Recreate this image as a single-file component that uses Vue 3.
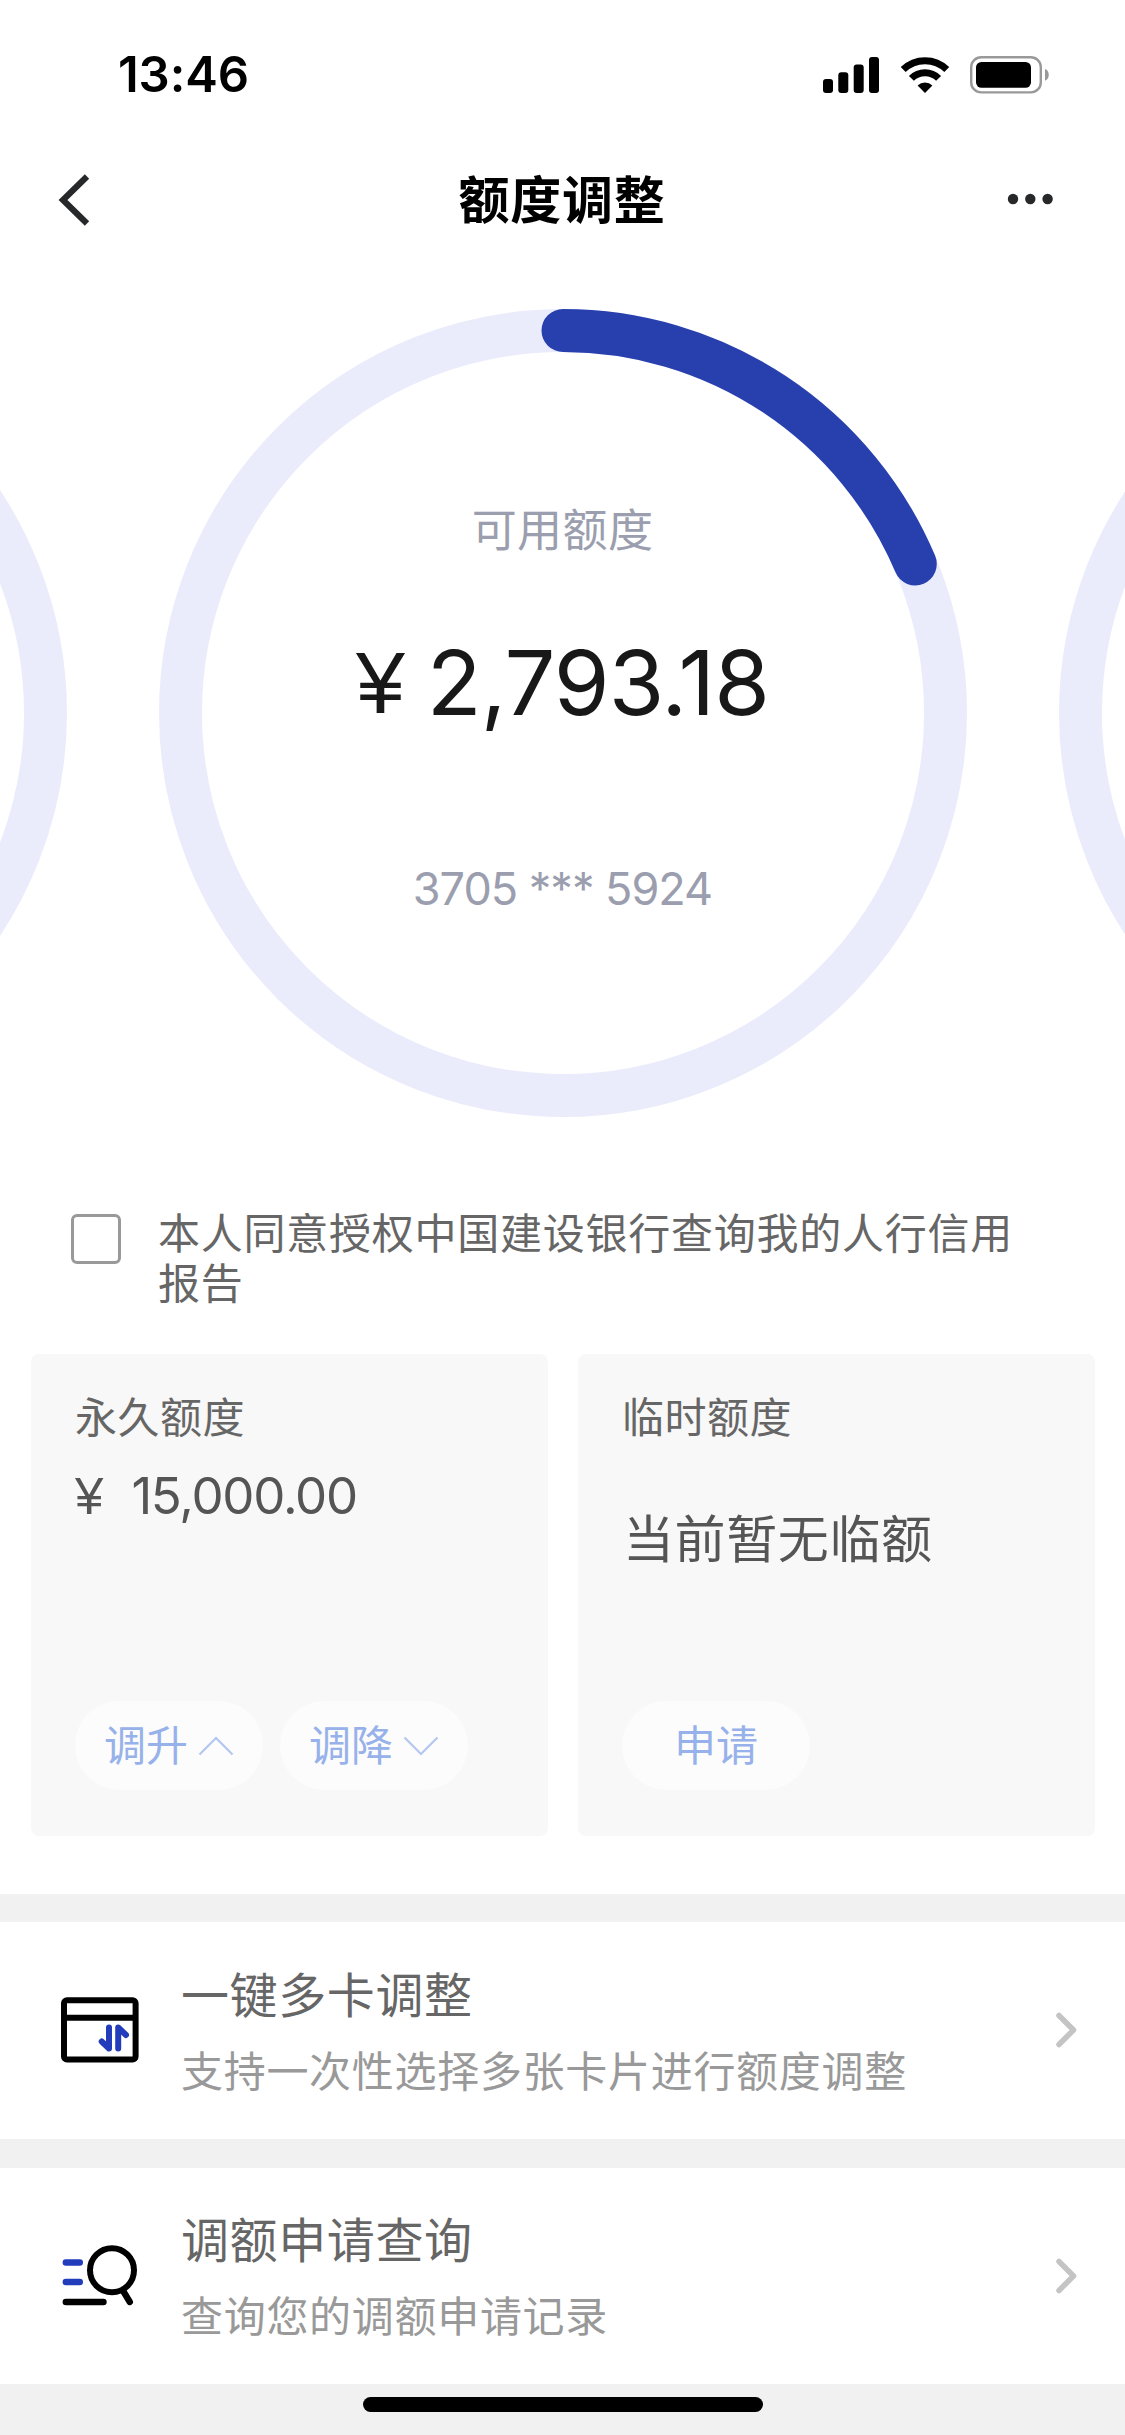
<script setup>
const radius = 382.5
const circumference = 2 * Math.PI * radius
const used = circumference * 0.1862
const dash = `${used} ${circumference}`

const entries = [
  { icon: 'card', title: '一键多卡调整', text: '支持一次性选择多张卡片进行额度调整' },
  { icon: 'search', title: '调额申请查询', text: '查询您的调额申请记录' },
]
</script>

<template>
  <div class="page">
    <header class="status">
      <span class="time">13:46</span>
      <div class="status-icons">
        <svg width="56" height="36" viewBox="0 0 56 36">
          <rect x="0" y="22" width="10" height="14" rx="3" />
          <rect x="15.3" y="15.3" width="10" height="20.7" rx="3" />
          <rect x="30.7" y="7.5" width="10" height="28.5" rx="3" />
          <rect x="46" y="0" width="10" height="36" rx="3" />
        </svg>
        <svg class="wifi" width="50" height="36" viewBox="0 0 50 36">
          <g fill="none" stroke="#000" stroke-width="7">
            <path d="M3.2 12.6A31.2 31.2 0 0 1 46.8 12.6" />
            <path d="M11.4 21.4A19.2 19.2 0 0 1 38.6 21.4" />
          </g>
          <path d="M25 36L17.6 28.4A10.6 10.6 0 0 1 32.4 28.4Z" />
        </svg>
        <svg class="battery" width="80" height="38" viewBox="0 0 80 38">
          <rect x="1.2" y="1.2" width="69.6" height="35.2" rx="10" fill="none" stroke="#999" stroke-width="2.4" />
          <rect x="6" y="6" width="55" height="25.8" rx="5.5" />
          <path d="M75 13C80 14.5 80 23 75 24.8Z" fill="#999" />
        </svg>
      </div>
    </header>

    <nav class="nav">
      <div class="side">
        <svg width="34" height="54" viewBox="0 0 34 54" fill="none" stroke="#27282a" stroke-width="6.2">
          <path d="M30 3.5L6 27L30 50.5" />
        </svg>
      </div>
      <h1>额度调整</h1>
      <div class="side end">
        <svg width="46" height="12" viewBox="0 0 46 12" fill="#27282a">
          <circle cx="6" cy="6" r="5.2" /><circle cx="23.3" cy="6" r="5.2" /><circle cx="40.6" cy="6" r="5.2" />
        </svg>
      </div>
    </nav>

    <section class="carousel">
      <svg class="ring" viewBox="0 0 808 808"><circle cx="404" cy="404" :r="radius" class="track" /></svg>
      <div class="quota">
        <svg class="ring" viewBox="0 0 808 808">
          <circle cx="404" cy="404" :r="radius" class="track" />
          <circle cx="404" cy="404" :r="radius" class="bar" :stroke-dasharray="dash" transform="rotate(-90 404 404)" />
        </svg>
        <div class="quota-info">
          <p class="quota-label">可用额度</p>
          <p class="quota-amount"><span class="yen">¥</span><span class="digits">2,793.18</span></p>
          <p class="quota-card">3705 *** 5924</p>
        </div>
      </div>
      <svg class="ring" viewBox="0 0 808 808"><circle cx="404" cy="404" :r="radius" class="track" /></svg>
    </section>

    <label class="agree">
      <span class="box"></span>
      <span class="agree-text">本人同意授权中国建设银行查询我的人行信用报告</span>
    </label>

    <section class="cards">
      <article class="card">
        <h2>永久额度</h2>
        <p class="amount"><span class="yen">¥</span><span class="digits">15,000.00</span></p>
        <div class="pills">
          <button class="pill">
            <span>调升</span>
            <svg width="36" height="20" viewBox="0 0 36 20"><path d="M1.5 18.5L18 2L34.5 18.5" /></svg>
          </button>
          <button class="pill">
            <span>调降</span>
            <svg width="36" height="20" viewBox="0 0 36 20"><path d="M1.5 1.5L18 18L34.5 1.5" /></svg>
          </button>
        </div>
      </article>
      <article class="card">
        <h2>临时额度</h2>
        <p class="empty">当前暂无临额</p>
        <div class="pills"><button class="pill solo"><span>申请</span></button></div>
      </article>
    </section>

    <section class="list">
      <a v-for="e in entries" :key="e.title" class="row">
        <svg v-if="e.icon === 'card'" width="78" height="66" viewBox="0 0 78 66" fill="none" stroke-linecap="round" stroke-linejoin="round">
          <rect x="3" y="3.2" width="71.6" height="59.4" rx="3" stroke="#000" stroke-width="6" />
          <path d="M3 20.8H74" stroke="#000" stroke-width="6" />
          <path d="M48 30.5V51.5L40.7 44.5M57.2 51.5V30.5L65 38" stroke="#233cbb" stroke-width="6" />
        </svg>
        <svg v-else width="78" height="66" viewBox="0 0 78 66" fill="none" stroke-linecap="round">
          <circle cx="51" cy="27.2" r="22" stroke="#000" stroke-width="6" />
          <path d="M62.5 48.5L68.8 59M4.8 59H42.5" stroke="#000" stroke-width="6.4" />
          <path d="M4.8 19.5H18.8M4.8 39H18.8" stroke="#233cbb" stroke-width="6.4" />
        </svg>
        <div class="row-body">
          <h3>{{ e.title }}</h3>
          <p>{{ e.text }}</p>
        </div>
        <svg class="go" width="24" height="36" viewBox="0 0 24 36"><path d="M4 3.5L18.5 18L4 32.5" /></svg>
      </a>
    </section>

    <footer class="home"><span></span></footer>
  </div>
</template>

<style>
body {
  margin: 0;
  background: #fff;
}
</style>

<style scoped>
.page {
  display: flex;
  flex-direction: column;
  width: 1125px;
  height: 2435px;
  overflow: hidden;
  background: #fff;
  font-family: "Noto Sans CJK SC", sans-serif;
}
h1, h2, h3, p {
  margin: 0;
  font-weight: 400;
}
svg {
  display: block;
  flex: none;
}
.status {
  display: flex;
  flex: none;
  justify-content: space-between;
  align-items: center;
  height: 149px;
  padding: 0 75px 0 118px;
}
.time {
  font: 600 49px/60px Inter, sans-serif;
  letter-spacing: -0.1px;
}
.status-icons {
  display: flex;
  align-items: center;
}
.wifi { margin-left: 20.5px; }
.battery { margin-left: 20.5px; }
.nav {
  display: flex;
  flex: none;
  align-items: center;
  height: 102px;
  padding: 0 72px 0 57px;
}
.side {
  display: flex;
  flex: 1;
}
.end {
  justify-content: flex-end;
  padding-bottom: 2px;
}
.nav h1 {
  padding: 0 0 6px 14px;
  font-size: 51px;
  line-height: 70px;
  font-weight: 700;
  letter-spacing: 0.8px;
}
.carousel {
  display: flex;
  flex: none;
  justify-content: center;
  gap: 92px;
  height: 808px;
  padding-top: 57.5px;
}
.ring {
  width: 808px;
  height: 808px;
}
.track, .bar {
  fill: none;
  stroke: #eaecfb;
  stroke-width: 43px;
}
.bar {
  stroke: #2840ae;
  stroke-linecap: round;
}
.quota {
  display: grid;
  flex: none;
}
.quota > * { grid-area: 1 / 1; }
.quota-info {
  display: flex;
  flex-direction: column;
  align-items: center;
}
.quota-label {
  margin-top: 187px;
  font-size: 45px;
  line-height: 64px;
  letter-spacing: 0.4px;
  color: #9b9eae;
}
.quota-amount {
  display: flex;
  align-items: baseline;
  gap: 22px;
  height: 110px;
  margin-top: 68px;
  font: 400 90px/110px Inter, sans-serif;
  color: #181818;
}
.yen { font-family: "Liberation Sans", sans-serif; }
.quota-amount .yen {
  font-size: 88px;
  margin-bottom: 2px;
  transform: translateY(-2px);
}
.quota-amount .digits { letter-spacing: -0.9px; }
.quota-card {
  margin-top: 121px;
  font: 400 45px/60px Inter, sans-serif;
  letter-spacing: -1px;
  color: #9b9eae;
}
.agree {
  display: flex;
  flex: none;
  gap: 37px;
  height: 148.5px;
  padding: 89px 80px 0 71px;
}
.box {
  flex: none;
  box-sizing: border-box;
  width: 50px;
  height: 50px;
  margin-top: 8px;
  border: 3px solid #999;
  border-radius: 6px;
}
.agree-text {
  font-size: 42px;
  line-height: 50px;
  letter-spacing: 0.75px;
  color: #666;
  width: 866px;
}
.cards {
  display: flex;
  flex: none;
  gap: 30px;
  padding: 0 30px 58px 31px;
}
.card {
  display: flex;
  flex: 1;
  flex-direction: column;
  box-sizing: border-box;
  height: 482px;
  padding: 31px 44px 46px;
  border-radius: 8px;
  background: #f8f8f8;
}
.card h2 {
  font-size: 42px;
  line-height: 60px;
  letter-spacing: 0.5px;
  color: #666;
}
.amount {
  display: flex;
  align-items: baseline;
  gap: 28px;
  margin-top: 21px;
  font: 400 51px/60px Inter, sans-serif;
  color: #555;
}
.amount .digits { letter-spacing: -1.25px; }
.empty {
  margin: 59px 0 0 1px;
  font-size: 51px;
  line-height: 64px;
  letter-spacing: 0.6px;
  color: #555;
}
.pills {
  display: flex;
  gap: 17px;
  margin-top: auto;
}
.pill {
  display: flex;
  align-items: center;
  box-sizing: border-box;
  width: 188px;
  height: 89px;
  gap: 10px;
  padding: 0 0 0 29px;
  border: 0;
  border-radius: 45px;
  background: #fcfcfc;
  color: #97b1ea;
  font: 400 42px/60px "Noto Sans CJK SC", sans-serif;
}
.pill span { padding-bottom: 5px; }
.pill.solo {
  justify-content: center;
  padding: 0;
}
.pill path {
  fill: none;
  stroke: #b4c7f1;
  stroke-width: 2.2px;
}
.list {
  display: flex;
  flex: none;
  flex-direction: column;
  gap: 29px;
  padding: 28px 0 0;
  background: #f1f1f1;
}
.row {
  display: flex;
  align-items: center;
  height: 216.5px;
  padding: 0 46px 0 61px;
  background: #fff;
}
.row-body {
  flex: 1;
  margin-left: 42px;
  padding-bottom: 4px;
}
.row h3 {
  font-size: 48px;
  line-height: 68px;
  letter-spacing: 0.6px;
  color: #666;
}
.row p {
  margin-top: 13px;
  font-size: 42px;
  line-height: 60px;
  letter-spacing: 0.7px;
  color: #999;
}
.go path {
  fill: none;
  stroke: #c4c4c4;
  stroke-width: 5.5px;
  stroke-linecap: round;
  stroke-linejoin: round;
}
.home {
  display: flex;
  flex: 1;
  justify-content: center;
  padding-top: 13px;
  background: #f1f1f1;
}
.home span {
  width: 400px;
  height: 15px;
  border-radius: 8px;
  background: #000;
}
</style>
